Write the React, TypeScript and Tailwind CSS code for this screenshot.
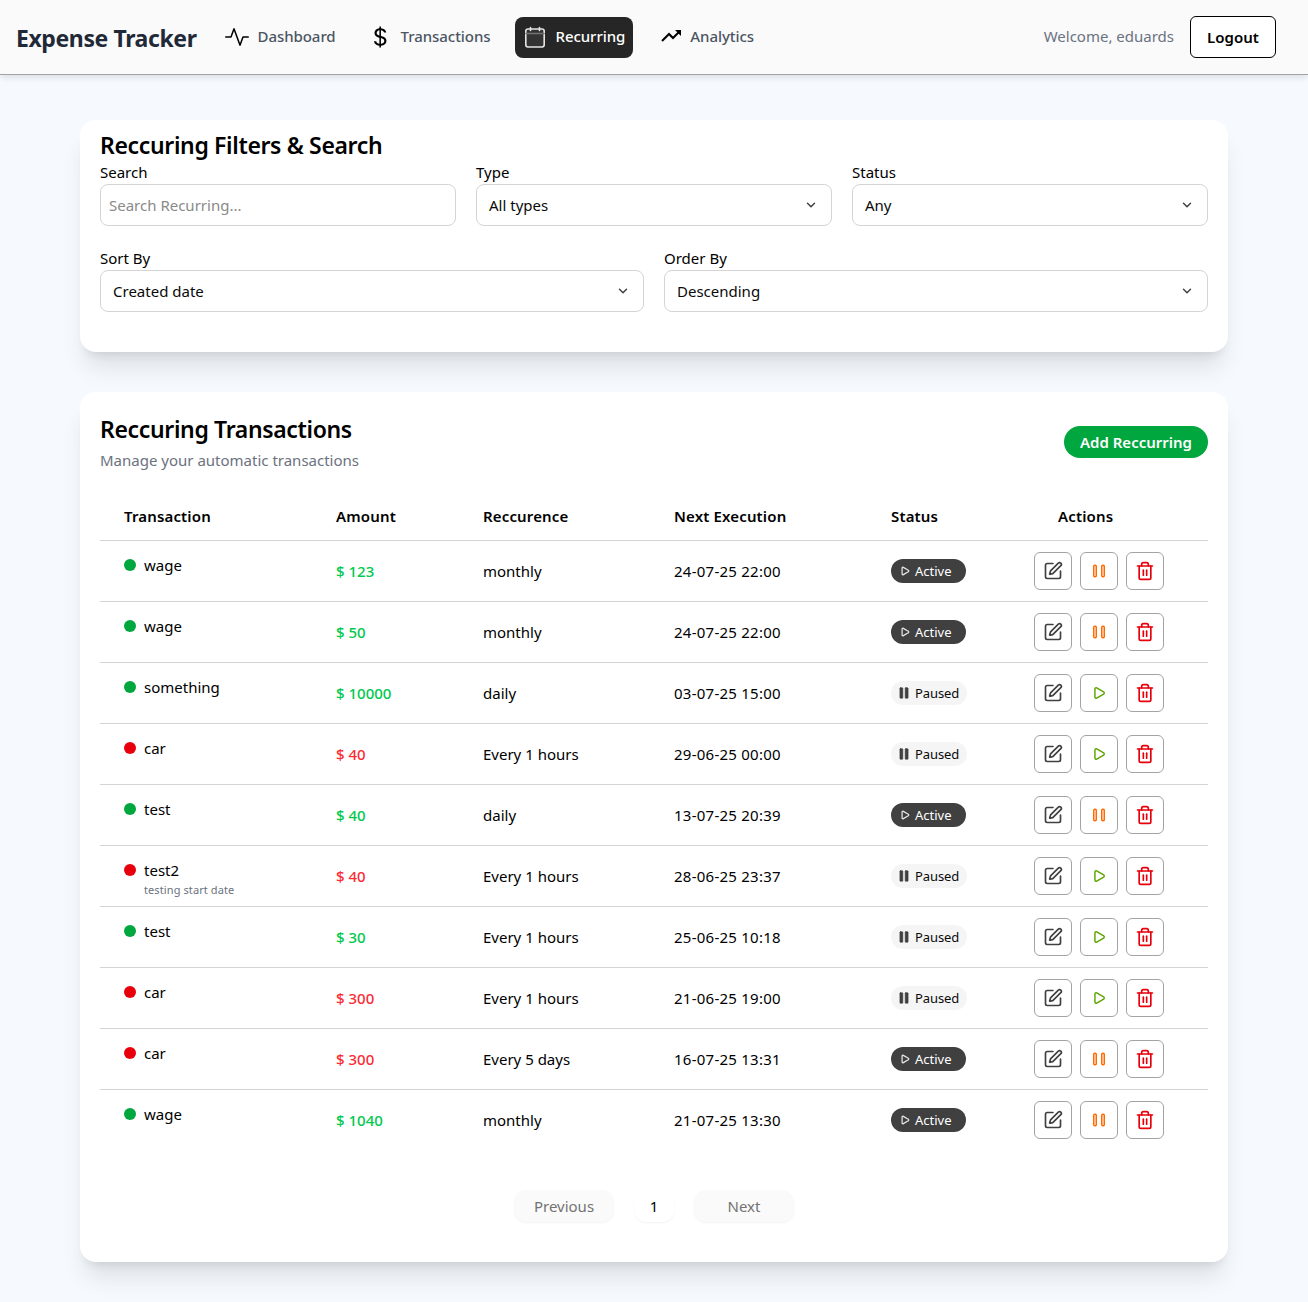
import { SquarePen, Pause, Play, Trash2, ChevronDown } from "lucide-react";
import { BsActivity, BsCurrencyDollar } from "react-icons/bs";
import { BiTrendingUp } from "react-icons/bi";

const rows = [
  { name: "wage", ok: true, amount: "$ 123", rec: "monthly", next: "24-07-25 22:00", active: true },
  { name: "wage", ok: true, amount: "$ 50", rec: "monthly", next: "24-07-25 22:00", active: true },
  { name: "something", ok: true, amount: "$ 10000", rec: "daily", next: "03-07-25 15:00", active: false },
  { name: "car", ok: false, amount: "$ 40", rec: "Every 1 hours", next: "29-06-25 00:00", active: false },
  { name: "test", ok: true, amount: "$ 40", rec: "daily", next: "13-07-25 20:39", active: true },
  { name: "test2", sub: "testing start date", ok: false, amount: "$ 40", rec: "Every 1 hours", next: "28-06-25 23:37", active: false },
  { name: "test", ok: true, amount: "$ 30", rec: "Every 1 hours", next: "25-06-25 10:18", active: false },
  { name: "car", ok: false, amount: "$ 300", rec: "Every 1 hours", next: "21-06-25 19:00", active: false },
  { name: "car", ok: false, amount: "$ 300", rec: "Every 5 days", next: "16-07-25 13:31", active: true },
  { name: "wage", ok: true, amount: "$ 1040", rec: "monthly", next: "21-07-25 13:30", active: true },
];

const gridCols = "grid grid-cols-[212px_147px_191px_217px_143px_198px]";

function NavItem({ icon, label, active }: { icon: React.ReactNode; label: string; active?: boolean }) {
  return (
    <div className={`flex h-[41px] items-center gap-[9px] rounded-lg px-2 text-[15px] font-medium tracking-[-0.06px] ${active ? "bg-[#262626] text-white" : "text-[#4b5563]"}`}>
      <span className="flex h-6 w-6 items-center justify-center text-black">{icon}</span>
      <span className="-mt-px">{label}</span>
    </div>
  );
}

function SelectBox({ label, value }: { label: string; value: string }) {
  return (
    <div>
      <div className="h-[22px] text-[15px] leading-[20px] text-black">{label}</div>
      <div className="flex h-[42px] items-center justify-between rounded-lg border border-[#d4d4d4] bg-white pl-3 pr-[13px] text-[15px] text-[#0a0a0a]">
        <span>{value}</span>
        <ChevronDown size={14} strokeWidth={2.5} className="text-[#404040]" />
      </div>
    </div>
  );
}

function ActionBtn({ children }: { children: React.ReactNode }) {
  return <div className="flex h-[38px] w-[38px] items-center justify-center rounded-md border border-[#a3a3a3] bg-white">{children}</div>;
}

function PauseBars() {
  return (
    <svg width="16" height="16" viewBox="0 0 16 16" fill="none" stroke="#ff6900" strokeWidth="1.5">
      <rect x="2.75" y="2.25" width="2.5" height="11.5" rx="1" />
      <rect x="10.75" y="2.25" width="2.5" height="11.5" rx="1" />
    </svg>
  );
}

export default function App() {
  return (
    <div className="min-h-[1302px] bg-[#f6faff] font-['Noto_Sans','Open_Sans',sans-serif] text-black">
      <header className="flex h-[75px] items-center justify-between border-b border-[#a3a3a3] bg-[#fafafa] pl-4 pr-8 shadow-[0_4px_6px_-1px_rgba(0,0,0,0.1)]">
        <div className="flex items-center">
          <div className="mr-5 mt-[3px] text-[23px] font-bold tracking-[-0.4px] text-[#1f2937]">Expense Tracker</div>
          <div className="flex items-center gap-4">
            <NavItem icon={<BsActivity size={24} />} label="Dashboard" />
            <NavItem icon={<BsCurrencyDollar size={24} />} label="Transactions" />
            <NavItem
              active
              icon={
                <svg width="24" height="24" viewBox="0 0 24 24" fill="none" stroke="#e5e5e5" strokeWidth="1.6" strokeLinecap="round">
                  <rect x="2.8" y="4" width="18.4" height="18" rx="2.2" fill="#333333" />
                  <path d="M3 8.5h18" stroke="#737373" />
                  <path d="M7.5 2.5v3M16.5 2.5v3" />
                </svg>
              }
              label="Recurring"
            />
            <NavItem icon={<BiTrendingUp size={24} className="translate-x-[2px]" />} label="Analytics" />
          </div>
        </div>
        <div className="flex items-center gap-4">
          <span className="-mt-px text-[15px] text-[#6b7280]">Welcome, eduards</span>
          <div className="flex h-[42px] w-[86px] items-center justify-center rounded-md border border-black bg-white text-[15px] font-semibold">Logout</div>
        </div>
      </header>

      <main className="px-20 pt-[45px]">
        <section className="h-[232px] rounded-2xl bg-white px-5 pt-[10px] shadow-xl">
          <h2 className="h-[32px] text-[23px] font-semibold leading-[30px] tracking-[-0.35px]">Reccuring Filters &amp; Search</h2>
          <div className="grid grid-cols-3 gap-5">
            <div>
              <div className="h-[22px] text-[15px] leading-[20px]">Search</div>
              <div className="flex h-[42px] items-center rounded-lg border border-[#d4d4d4] bg-white pl-2 text-[15px] text-[#8a8a8a]">Search Recurring...</div>
            </div>
            <SelectBox label="Type" value="All types" />
            <SelectBox label="Status" value="Any" />
          </div>
          <div className="mt-[22px] grid grid-cols-2 gap-5">
            <SelectBox label="Sort By" value="Created date" />
            <SelectBox label="Order By" value="Descending" />
          </div>
        </section>

        <section className="mt-10 h-[870px] rounded-2xl bg-white px-5 pt-5 shadow-xl">
          <div className="flex items-start justify-between">
            <div>
              <h2 className="h-[36px] text-[23px] font-semibold leading-[35px] tracking-[-0.35px]">Reccuring Transactions</h2>
              <p className="mt-[2px] text-[15px] leading-[20px] text-[#6b7280]">Manage your automatic transactions</p>
            </div>
            <div className="mt-[14px] flex h-[32px] w-[144px] items-center justify-center rounded-full bg-[#00a63e] text-[15px] font-semibold text-white">Add Reccurring</div>
          </div>

          <div className={`${gridCols} mt-[20px] h-[51px] items-center border-b border-[#d4d4d4] pt-[2px] text-[15px] font-semibold tracking-[0.15px]`}>
            <div className="pl-6">Transaction</div>
            <div className="pl-6">Amount</div>
            <div className="pl-6">Reccurence</div>
            <div className="pl-6">Next Execution</div>
            <div className="pl-6">Status</div>
            <div className="pl-12">Actions</div>
          </div>

          {rows.map((r, i) => (
            <div key={i} className={`${gridCols} h-[61px] items-center border-b text-[15px] ${i < rows.length - 1 ? "border-[#d4d4d4]" : "border-transparent"}`}>
              <div className="flex h-full items-start gap-2 pl-6 pt-[14px]">
                <span className={`mt-[4px] h-3 w-3 shrink-0 rounded-full ${r.ok ? "bg-[#00a63e]" : "bg-[#e7000b]"}`} />
                <div>
                  <div className="text-[15px] leading-[20px]">{r.name}</div>
                  {r.sub && <div className="mt-[3px] text-[11px] leading-[14px] tracking-[0.1px] text-[#6b7280]">{r.sub}</div>}
                </div>
              </div>
              <div className={`pl-6 font-medium ${r.ok ? "text-[#00c950]" : "text-[#fb2c36]"}`}>{r.amount}</div>
              <div className="pl-6">{r.rec}</div>
              <div className="pl-6 tracking-[0.25px]">{r.next}</div>
              <div className="pl-6">
                {r.active ? (
                  <div className="flex h-[24px] w-[75px] items-center gap-[5px] rounded-full bg-[#404040] pl-[9px] text-[13px] text-white">
                    <Play size={10} strokeWidth={3} className="text-[#e5e5e5]" />
                    <span className="mt-px">Active</span>
                  </div>
                ) : (
                  <div className="flex h-[24px] w-[76px] items-center gap-[4px] rounded-full bg-[#f5f5f5] pl-[6px] text-[13px] tracking-[-0.1px] text-[#0a0a0a]">
                    <Pause size={14} strokeWidth={1} fill="#404040" className="text-[#404040]" />
                    <span className="mt-px">Paused</span>
                  </div>
                )}
              </div>
              <div className="flex items-center gap-2 pl-6">
                <ActionBtn><SquarePen size={20} strokeWidth={2} className="text-[#404040]" /></ActionBtn>
                <ActionBtn>
                  {r.active ? <PauseBars /> : <Play size={14} strokeWidth={2.5} className="text-[#5ea500]" />}
                </ActionBtn>
                <ActionBtn><Trash2 size={20} strokeWidth={2} className="text-[#e7000b]" /></ActionBtn>
              </div>
            </div>
          ))}

          <div className="mt-[39px] flex items-center justify-center gap-5 text-[15px]">
            <div className="flex h-[32px] w-[100px] items-center justify-center rounded-xl bg-[#fafafa] text-[#737373] shadow-[0_1px_2px_rgba(0,0,0,0.05)]">Previous</div>
            <div className="flex h-[32px] w-[40px] items-center justify-center rounded-xl bg-white shadow-[0_1px_2px_rgba(0,0,0,0.05)]">1</div>
            <div className="flex h-[32px] w-[100px] items-center justify-center rounded-xl bg-[#fafafa] text-[#737373] shadow-[0_1px_2px_rgba(0,0,0,0.05)]">Next</div>
          </div>
        </section>
      </main>
    </div>
  );
}
